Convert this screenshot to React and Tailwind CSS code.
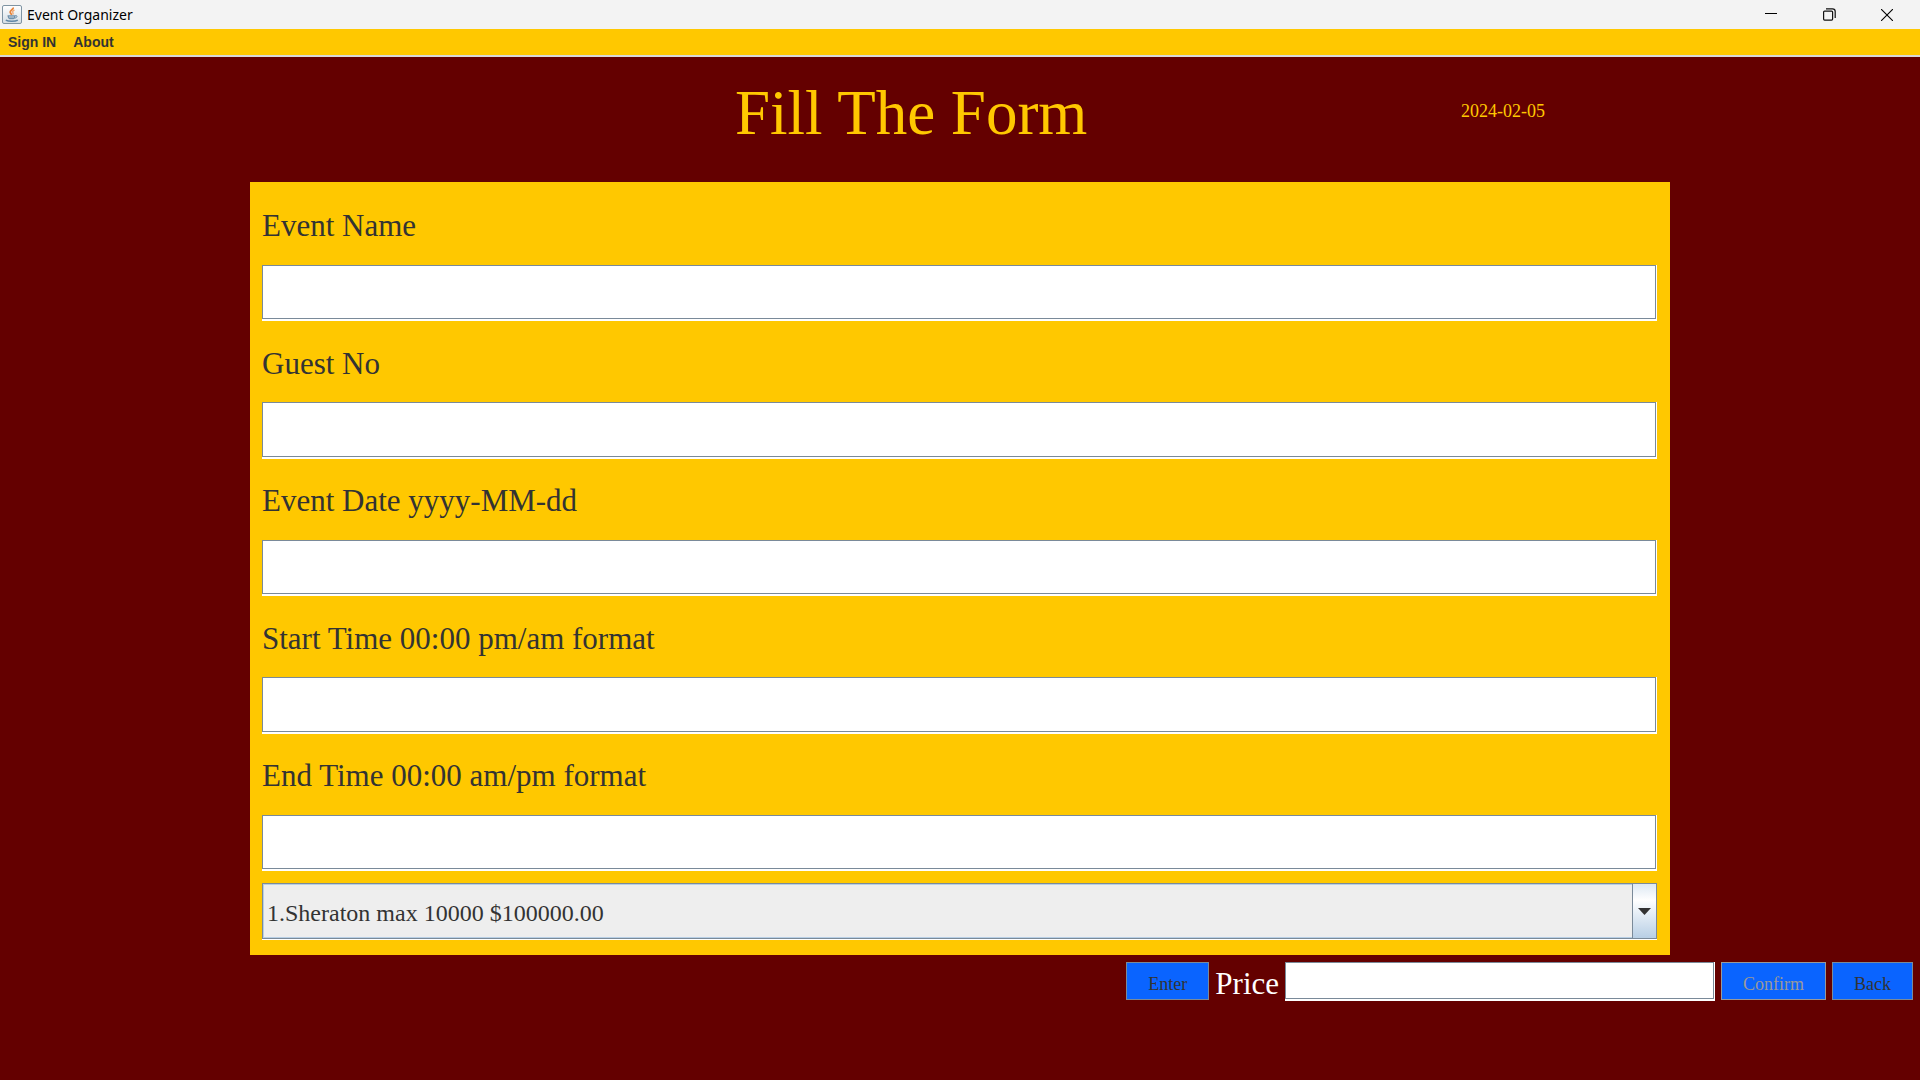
import React from "react";

const serif = "font-['Liberation_Serif','Times_New_Roman',serif]";

const fields = [
  { id: "event-name", label: "Event Name" },
  { id: "guest-no", label: "Guest No" },
  { id: "event-date", label: "Event Date yyyy-MM-dd" },
  { id: "start-time", label: "Start Time 00:00 pm/am format" },
  { id: "end-time", label: "End Time 00:00 am/pm format" },
];

function JavaIcon() {
  return (
    <svg width="20" height="20" viewBox="0 0 20 20" aria-hidden="true">
      <defs>
        <linearGradient id="tile" x1="0" y1="0" x2="0" y2="1">
          <stop offset="0" stopColor="#ffffff" />
          <stop offset="1" stopColor="#d3dde4" />
        </linearGradient>
      </defs>
      <rect x="0.5" y="0.5" width="19" height="18" rx="1.5" fill="url(#tile)" stroke="#7f94a3" />
      <path d="M11.200 2.500c.6 2-3.600 2.900-3 4.800.2.9 1.300 1.500 1.100 2.700" fill="none" stroke="#e8833a" strokeWidth="1.800" />
      <path d="M12.500 5.200c-2 .8-2.200 1.600-1.600 2.400.5.7.3 1.300-.3 1.900" fill="none" stroke="#f0a56c" strokeWidth="1.300" />
      <path d="M5.500 10.200h8c0 2-.8 3.500-2 4H7.500c-1.200-.5-2-2-2-4z" fill="#6f90ab" />
      <path d="M13.300 10.700c2.400-.6 2.400 2-.8 2.500" fill="none" stroke="#5f86a6" strokeWidth="1" />
      <path d="M7 12h5" stroke="#dbe6ee" strokeWidth="0.800" />
      <path d="M3.800 15.200c2.500 1.500 9.500 1.500 12 0" fill="none" stroke="#5f86a6" strokeWidth="1.500" />
    </svg>
  );
}

function TitleBar() {
  const control = "flex h-full w-[58px] items-center justify-center";
  return (
    <header className="flex h-[29px] items-center bg-[#f3f3f3] pr-1 pl-0.5">
      <JavaIcon />
      <span className="grow pl-[5px] font-['Noto_Sans','Open_Sans',sans-serif] text-[14px] leading-5 text-black">
        Event Organizer
      </span>
      <button type="button" aria-label="Minimize" className={control}>
        <svg width="12" height="12" viewBox="0 0 12 12" stroke="#000">
          <path d="M0 4.500h12" />
        </svg>
      </button>
      <button type="button" aria-label="Restore" className={control}>
        <svg width="13" height="13" viewBox="0 0 13 13" fill="none" stroke="#111" strokeWidth="1.200">
          <rect x="0.600" y="3.100" width="9" height="9" rx="1" />
          <path d="M3 .8h6.500a2.700 2.700 0 0 1 2.700 2.700V10" />
        </svg>
      </button>
      <button type="button" aria-label="Close" className={control}>
        <svg width="12" height="12" viewBox="0 0 12 12" stroke="#000" strokeWidth="1.100">
          <path d="M0 0l12 12M12 0L0 12" />
        </svg>
      </button>
    </header>
  );
}

function MenuBar() {
  return (
    <nav className="flex h-7 items-center gap-[17px] border-b-2 border-[#d8d8d8] bg-[#ffc800] px-2 font-['Liberation_Sans',Arial,sans-serif] text-[14px] leading-5 font-bold text-[#333333]">
      <button type="button">Sign IN</button>
      <button type="button">About</button>
    </nav>
  );
}

/* Sunken text box: grey outline with a white edge on the right and bottom. */
function TextBox({ id, className }) {
  return (
    <div className={`flex bg-white pr-px pb-0.5 ${className}`}>
      <input
        id={id}
        type="text"
        className="w-full min-w-0 border border-[#7a8a99] bg-white px-1 text-[24px] text-[#333333] outline-none"
      />
    </div>
  );
}

function VenueSelect() {
  return (
    <div className="relative flex border-b border-white">
      <select
        aria-label="Venue"
        className="w-full appearance-none border border-[#7a8a99] bg-[#eeeeee] pl-1 pt-1 text-[24px] text-[#333333] shadow-[inset_0_0_0_1px_#b8cfe5] outline-none"
      >
        <option>1.Sheraton max 10000 $100000.00</option>
      </select>
      <span className="pointer-events-none absolute inset-y-0 right-0 flex w-[25px] items-center justify-center border border-[#7a8a99] bg-linear-to-b from-[#dde8f3] via-white via-30% to-[#b8cfe5]">
        <svg width="13" height="7" viewBox="0 0 13 7" fill="#333333" aria-hidden="true">
          <path d="M0 0h13L6.500 7z" />
        </svg>
      </span>
    </div>
  );
}

function ActionButton({ children, disabled }) {
  return (
    <button
      type="button"
      disabled={disabled}
      className="h-[38px] border border-[#7a8a99] bg-[#0a64ff] px-[21px] pt-[5px] text-[18px] leading-5 text-[#333333] disabled:border-[#999999] disabled:text-[#999999]"
    >
      {children}
    </button>
  );
}

export default function App() {
  return (
    <div className="flex min-h-screen flex-col bg-[#640000]">
      <TitleBar />
      <MenuBar />
      <main className={`flex grow flex-col ${serif}`}>
        <div className="grid h-[125px] grid-cols-[735fr_726fr_459fr] pt-5 text-[#ffc800]">
          <h1 className="col-start-2 text-[63px] leading-[72px] whitespace-nowrap">Fill The Form</h1>
          <time dateTime="2024-02-05" className="pt-6 text-[18px] leading-5">
            2024-02-05
          </time>
        </div>
        <form className="mx-[250px] grid grow auto-rows-fr gap-3 bg-[#ffc800] pt-3.5 pr-[13px] pb-[15px] pl-3">
          {fields.map((field) => (
            <React.Fragment key={field.id}>
              <label htmlFor={field.id} className="flex items-center pt-1 text-[31px] leading-9 text-[#333333]">
                {field.label}
              </label>
              <TextBox id={field.id} className="min-h-10" />
            </React.Fragment>
          ))}
          <VenueSelect />
        </form>
        <div className="flex justify-end gap-1.5 pt-[7px] pr-[7px] pb-[78px]">
          <ActionButton>Enter</ActionButton>
          <label htmlFor="price" className="pt-1 text-[31px] leading-9 text-white">
            Price
          </label>
          <TextBox id="price" className="h-[39px] w-[430px]" />
          <ActionButton disabled>Confirm</ActionButton>
          <ActionButton>Back</ActionButton>
        </div>
      </main>
    </div>
  );
}
